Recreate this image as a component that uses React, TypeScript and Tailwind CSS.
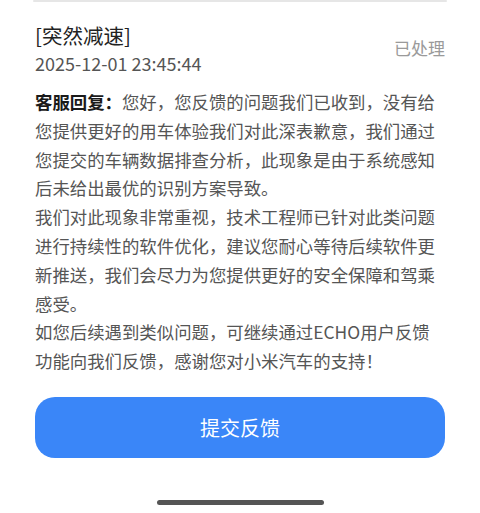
import React from "react";

const FONT = '"Noto Sans CJK SC", "Noto Sans", sans-serif';

export default function App() {
  return (
    <div className="w-[480px] h-[513px] bg-white flex flex-col overflow-hidden" style={{ fontFamily: FONT }}>
      <div className="mx-[33px] h-[2px] rounded-full bg-[#e6e6e6]" />

      <div className="px-[35px] pt-[19px] flex items-start justify-between">
        <div className="flex flex-col">
          <div className="text-[20.5px] leading-[28px] text-[#222]">[突然减速]</div>
          <div className="text-[18px] leading-[26px] text-[#555] mt-[1px]">2025-12-01 23:45:44</div>
        </div>
        <div className="text-[17px] leading-[24px] text-[#9a9a9a] mt-[15px]">已处理</div>
      </div>

      <div className="px-[35px] pt-[12px] text-[17.4px] leading-[28.8px] text-[#555]">
        <p>
          <span className="font-bold text-[#1a1a1a]">客服回复：</span>
          您好，您反馈的问题我们已收到，没有给您提供更好的用车体验我们对此深表歉意，我们通过您提交的车辆数据排查分析，此现象是由于系统感知后未给出最优的识别方案导致。
        </p>
        <p>
          我们对此现象非常重视，技术工程师已针对此类问题进行持续性的软件优化，建议您耐心等待后续软件更新推送，我们会尽力为您提供更好的安全保障和驾乘感受。
        </p>
        <p>如您后续遇到类似问题，可继续通过ECHO用户反馈功能向我们反馈，感谢您对小米汽车的支持！</p>
      </div>

      <div className="px-[35px] mt-auto">
        <button className="w-full h-[61px] rounded-[20px] bg-[#3a86f8] text-white text-[20px]">提交反馈</button>
      </div>

      <div className="flex justify-center pt-[42px] pb-[8px]">
        <div className="w-[167px] h-[5px] rounded-full bg-[#555]" />
      </div>
    </div>
  );
}
